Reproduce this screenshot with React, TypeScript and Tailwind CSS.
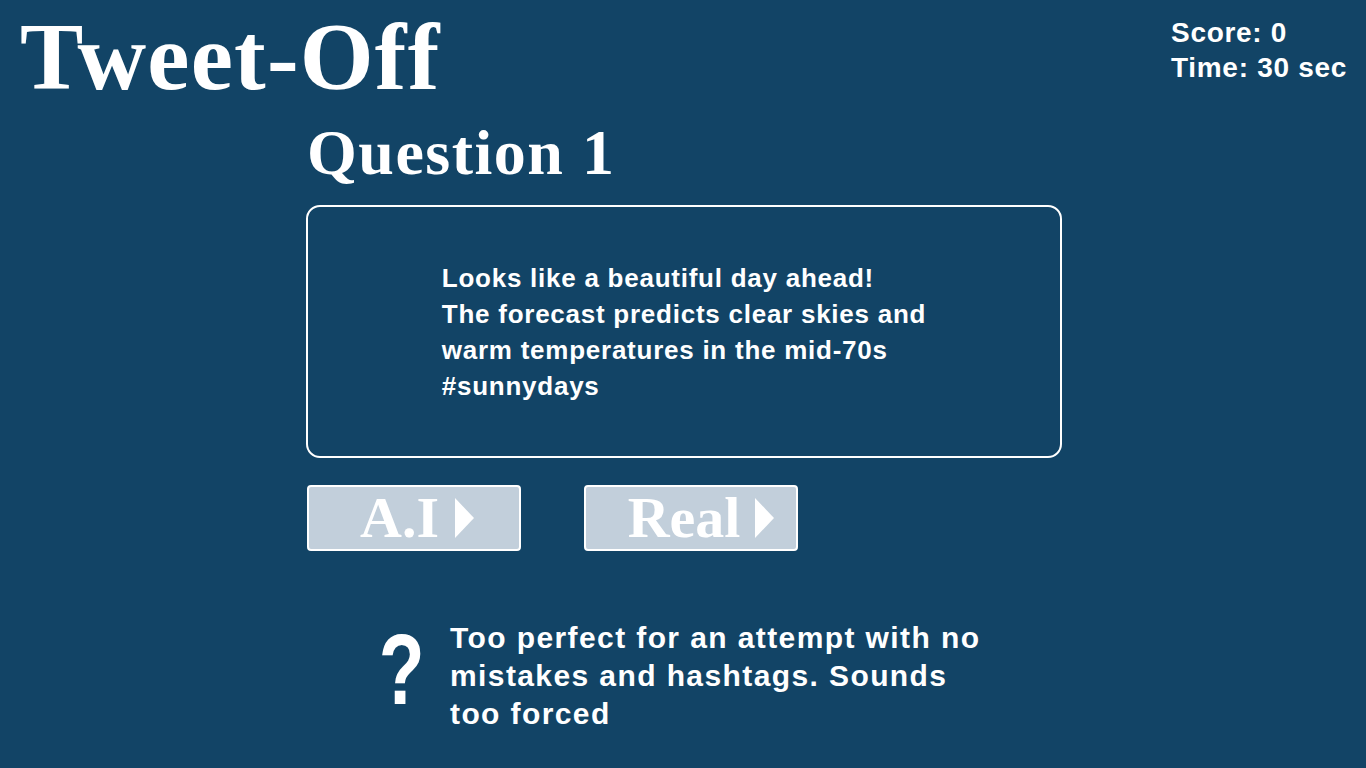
import React from "react";

const sans = { fontFamily: '"Liberation Sans", Arial, sans-serif' };
const serif = { fontFamily: '"Liberation Serif", "Times New Roman", serif' };

function Arrow() {
  return (
    <svg width="19" height="40" viewBox="0 0 19 40" className="shrink-0">
      <polygon points="0,0 19,20 0,40" fill="white" />
    </svg>
  );
}

export default function App() {
  return (
    <div className="min-h-screen w-full bg-[#124466] text-white overflow-hidden">
      <div className="flex justify-between items-start h-[105px]">
        <div className="pl-[20px] pt-[10px] text-[95px] leading-none font-bold tracking-[1.2px]" style={serif}>
          Tweet-Off
        </div>
        <div className="pr-[19px] pt-[15px] text-[28px] leading-[35px] font-bold tracking-[0.7px]" style={sans}>
          <div>Score: 0</div>
          <div>Time: 30 sec</div>
        </div>
      </div>
      <div className="ml-[306px] w-[756px]">
        <h1 className="mt-[16px] ml-[1px] text-[64px] leading-none font-bold tracking-[1.5px]" style={serif}>
          Question 1
        </h1>
        <div className="mt-[20px] h-[253px] border-2 border-white rounded-[14px] flex items-center justify-center">
          <p className="text-[26px] leading-[36px] font-bold tracking-[0.75px]" style={sans}>
            Looks like a beautiful day ahead!
            <br />
            The forecast predicts clear skies and
            <br />
            warm temperatures in the mid-70s
            <br />
            #sunnydays
          </p>
        </div>
        <div className="mt-[27px] flex gap-[63px] ml-[1px]">
          <button className="w-[214px] h-[66px] bg-[#c2cfdb] border-2 border-white rounded-[4px] flex items-center justify-center gap-[16px] pl-[6px]">
            <span className="text-[58px] leading-none font-bold text-white" style={serif}>A.I</span>
            <Arrow />
          </button>
          <button className="w-[214px] h-[66px] bg-[#c2cfdb] border-2 border-white rounded-[4px] flex items-center justify-center gap-[15px] pl-[20px]">
            <span className="text-[58px] leading-none font-bold text-white" style={serif}>Real</span>
            <Arrow />
          </button>
        </div>
        <div className="mt-[68px] ml-[77px] flex items-start gap-[30px]">
          <div className="w-[37px] flex justify-center">
            <span className="text-[100px] leading-none font-bold scale-x-75 inline-block" style={sans}>?</span>
          </div>
          <p className="text-[30px] leading-[38px] font-bold tracking-[1.4px]" style={sans}>
            Too perfect for an attempt with no
            <br />
            mistakes and hashtags. Sounds
            <br />
            too forced
          </p>
        </div>
      </div>
    </div>
  );
}
